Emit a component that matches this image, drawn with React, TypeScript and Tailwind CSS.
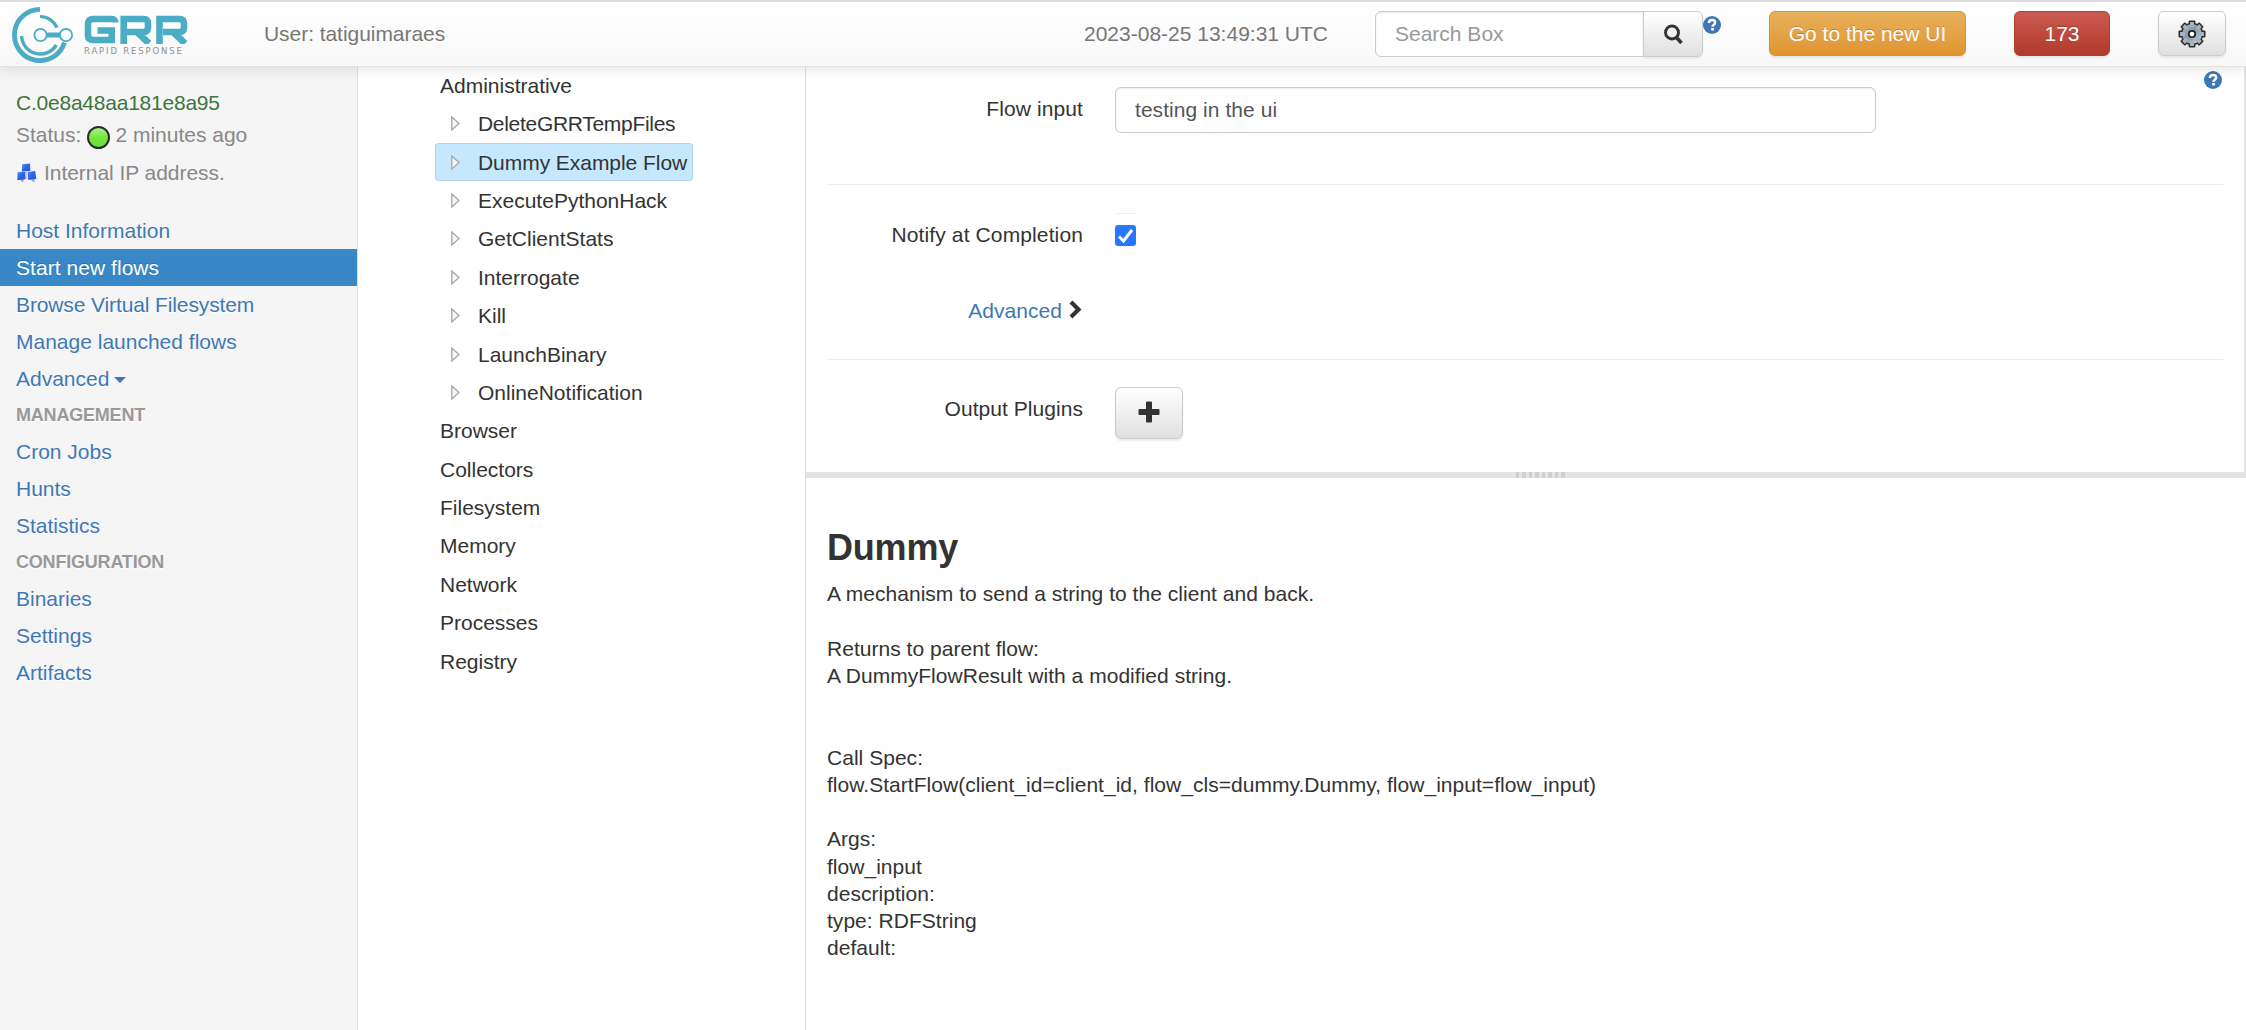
import React from 'react';

const SIDE_TOP = ['Host Information', 'Start new flows', 'Browse Virtual Filesystem', 'Manage launched flows'];
const CHILDREN = ['DeleteGRRTempFiles', 'Dummy Example Flow', 'ExecutePythonHack', 'GetClientStats', 'Interrogate', 'Kill', 'LaunchBinary', 'OnlineNotification'];
const ROOTS = ['Browser', 'Collectors', 'Filesystem', 'Memory', 'Network', 'Processes', 'Registry'];
const TEETH = [0, 45, 90, 135, 180, 225, 270, 315];

const DOC = `A mechanism to send a string to the client and back.

Returns to parent flow:
A DummyFlowResult with a modified string.


Call Spec:
flow.StartFlow(client_id=client_id, flow_cls=dummy.Dummy, flow_input=flow_input)

Args:
flow_input
description:
type: RDFString
default:`;

function LogoMark() {
  return (
    <svg className="block h-[62px] w-[64px] shrink-0" viewBox="0 0 64 62" fill="none" stroke="#4bacc6">
      <path d="M30 6.400A25.600 25.600 0 1 0 54.500 39.500" strokeWidth="4.800" />
      <path d="M30 13.500A18.500 18.500 0 0 1 47 24.700" strokeWidth="3.200" />
      <path d="M11.600 33A18.700 18.700 0 0 0 46.300 42" strokeWidth="3.400" />
      <path d="M36.500 32H50" strokeWidth="5" />
      <circle cx="30.500" cy="32" r="6.100" strokeWidth="1.800" fill="#fdfdfd" />
      <circle cx="56" cy="32" r="6.100" strokeWidth="1.800" fill="#fdfdfd" />
    </svg>
  );
}

function HelpIcon() {
  return (
    <svg className="block h-[18px] w-[18px]" viewBox="0 0 18 18">
      <circle cx="9" cy="9" r="9" fill="#3f78b5" />
      <path d="M5.900 7.100C5.900 5 7.200 4.100 9.100 4.100s3 1 3 2.600c0 2-2.600 2-2.600 4" fill="none" stroke="#fff" strokeWidth="2.500" />
      <rect x="8.200" y="12" width="2.700" height="2.500" fill="#fff" />
    </svg>
  );
}

function Gear() {
  return (
    <svg className="block h-[28px] w-[28px]" viewBox="-14 -14 28 28">
      <defs>
        <linearGradient id="gear" gradientUnits="userSpaceOnUse" x1="-10" y1="-10" x2="10" y2="10">
          <stop offset="0" stopColor="#a9b5c3" />
          <stop offset="0.45" stopColor="#8797a9" />
          <stop offset="1" stopColor="#d3d9e0" />
        </linearGradient>
      </defs>
      <circle r="11.3" fill="#2b2b2b" />
      {TEETH.map((a) => <rect key={a} x="-3.400" y="-13.500" width="6.800" height="7" rx="1" fill="#2b2b2b" transform={`rotate(${a})`} />)}
      <circle r="9.900" fill="url(#gear)" />
      {TEETH.map((a) => <rect key={a} x="-2" y="-12" width="4" height="5" fill="#a7b2bf" transform={`rotate(${a})`} />)}
      <circle r="3.200" fill="#fff" stroke="#222" strokeWidth="1.800" />
    </svg>
  );
}

function Cubes() {
  return (
    <svg className="block h-[20px] w-[21px]" viewBox="0 0 21 20">
      <defs>
        <linearGradient id="cube" x1="0" y1="0" x2="1" y2="1">
          <stop offset="0" stopColor="#5b8df2" />
          <stop offset="0.5" stopColor="#2a62e6" />
          <stop offset="1" stopColor="#2556d6" />
        </linearGradient>
      </defs>
      <path d="M3 16h5l-1 3.500zM14 16h5l-1 3.500z" fill="#a5a5a5" />
      <path d="M6.200 1.200L14 0.600L14.300 8L5.800 8.600z" fill="url(#cube)" />
      <path d="M1.500 9.300L9.300 8.700L9.700 16.200L1.300 17.200z" fill="url(#cube)" />
      <path d="M11.600 9L19.200 8L20.300 15.800L12.200 17z" fill="url(#cube)" />
      <path d="M9.300 8.700L11 8.200L11.500 15.500L9.700 16.200z" fill="#c9c9cf" />
    </svg>
  );
}

function SideLink({ label, active = false, caret = false }: { label: string; active?: boolean; caret?: boolean }) {
  return (
    <a
      className={
        active
          ? 'flex h-[37px] items-center bg-[#3887c7] pl-4 tracking-[0.05px] text-white [text-shadow:0_-1px_0_rgba(0,0,0,0.2)]'
          : label === 'Browse Virtual Filesystem'
            ? 'flex h-[37px] items-center pl-4 tracking-[-0.12px] text-[#3f78b5] [text-shadow:0_1px_0_#fff]'
            : 'flex h-[37px] items-center pl-4 text-[#3f78b5] [text-shadow:0_1px_0_#fff]'
      }
    >
      {label}
      {caret && <span className="ml-[5px] mt-0.5 border-x-[6px] border-t-[6px] border-x-transparent border-t-[#3f78b5]" />}
    </a>
  );
}

function SideHeader({ label }: { label: string }) {
  return <div className="flex h-[36.2px] items-center pl-4 pt-px text-[18px] font-bold tracking-[-0.2px] text-[#999] [text-shadow:0_1px_0_#fff]">{label}</div>;
}

export default function App() {
  return (
    <div className="flex h-[1030px] w-[2246px] flex-col overflow-hidden bg-white font-['Liberation_Sans',Arial,sans-serif] text-[21px] leading-[27.25px] text-[#333]">
      <header className="relative z-10 flex h-[67px] shrink-0 items-start border-b border-[#e2e2e2] border-t-2 border-t-[#dcdcdc] bg-linear-to-b from-white to-[#f8f8f8] pl-[10px] text-[#777] shadow-[0_1px_14px_rgba(0,0,0,0.12)]">
        <div className="mt-[1px] flex">
          <LogoMark />
          <div className="ml-[10px] mt-[12px] w-[106px]">
            <svg className="block h-[29px] w-[105px]" viewBox="0 0 105 29" fill="none" stroke="#4bacc6" strokeWidth="6.600">
              <path d="M31 7.500V7Q31 4 28 4H9Q4 4 4 8.500V20Q4 25 9 25H27.700V15.500H13.500" />
              <path d="M39.700 29V4H59.500Q64 4 64 8.500V12.500Q64 17 59.500 17H43M53 17L65 28.500" />
              <path d="M75.500 29V4H95.500Q100 4 100 8.500V12.500Q100 17 95.500 17H79M89 17L101 28.500" />
            </svg>
            <div className="mt-[3px] whitespace-nowrap font-['DejaVu_Sans',sans-serif] text-[8.5px] leading-[9px] tracking-[1.85px] text-[#8f8f8f]">RAPID RESPONSE</div>
          </div>
        </div>
        <div className="ml-[74px] flex h-[64px] w-[820px] items-center tracking-[-0.05px]">User: tatiguimaraes</div>
        <div className="flex h-[64px] w-[291px] items-center whitespace-nowrap">2023-08-25 13:49:31 UTC</div>
        <div className="mt-[9px] flex h-[46px] w-[328px]">
          <div className="flex w-[269px] items-center rounded-l-md border border-[#ccc] bg-white pl-[19px] text-[#999] shadow-[inset_0_1px_2px_rgba(0,0,0,0.08)]">Search Box</div>
          <div className="-ml-px flex w-[60px] items-center justify-center rounded-r-md border border-[#ccc] bg-linear-to-b from-white to-[#e0e0e0] shadow-[0_2px_2px_rgba(0,0,0,0.06)]">
            <svg className="h-[21px] w-[21px]" viewBox="0 0 21 21" fill="none" stroke="#333" strokeWidth="2.9">
              <circle cx="9" cy="8.500" r="6.500" />
              <path d="M13 13l5.500 6" strokeWidth="3.500" />
            </svg>
          </div>
        </div>
        <div className="mt-[14px]"><HelpIcon /></div>
        <button className="ml-[48px] mt-[9px] h-[45px] w-[197px] rounded-md border border-[#d9942f] bg-linear-to-b from-[#e8b05b] to-[#e0952f] text-white shadow-[0_2px_2px_rgba(0,0,0,0.08)] [text-shadow:0_-1px_0_rgba(0,0,0,0.2)]">Go to the new UI</button>
        <button className="ml-[48px] mt-[9px] h-[45px] w-[96px] rounded-md border border-[#b23e31] bg-linear-to-b from-[#cb5a50] to-[#b03a2b] text-white shadow-[0_2px_2px_rgba(0,0,0,0.08)] [text-shadow:0_-1px_0_rgba(0,0,0,0.2)]">173</button>
        <button className="ml-[48px] mt-[9px] flex h-[45px] w-[68px] items-center justify-center rounded-md border border-[#ccc] bg-linear-to-b from-white to-[#e0e0e0] shadow-[0_2px_2px_rgba(0,0,0,0.08)]"><Gear /></button>
      </header>

      <div className="flex min-h-0 flex-1">
        <aside className="w-[358px] shrink-0 border-r border-[#e0e0e0] bg-[#f5f5f5]">
          <div className="h-[145px] pl-4 pt-[22px] text-[#888]">
            <div className="tracking-[-0.23px] text-[#3c763d] leading-[28px]">C.0e8a48aa181e8a95</div>
            <div className="mt-[2px] flex h-[32px] items-center">
              Status:
              <span className="ml-[6px] mr-[5px] mt-1 h-[23px] w-[23px] rounded-full border-2 border-[#2b2b2b] bg-linear-to-b from-[#a5f283] via-[#72e83a] to-[#68e02e]" />
              2 minutes ago
            </div>
            <div className="mt-[8px] flex h-[28px] items-center gap-[7px] tracking-[-0.05px]"><Cubes />Internal IP address.</div>
          </div>
          {SIDE_TOP.map((l) => <SideLink key={l} label={l} active={l === 'Start new flows'} />)}
          <SideLink label="Advanced" caret />
          <SideHeader label="MANAGEMENT" />
          {['Cron Jobs', 'Hunts', 'Statistics'].map((l) => <SideLink key={l} label={l} />)}
          <SideHeader label="CONFIGURATION" />
          {['Binaries', 'Settings', 'Artifacts'].map((l) => <SideLink key={l} label={l} />)}
        </aside>

        <nav className="w-[448px] shrink-0 border-r border-[#e0e0e0] pl-[77px]">
          <div className="flex h-[37.6px] items-center pl-[5px]">Administrative</div>
          {CHILDREN.map((c) => (
            <div key={c} className="flex h-[38.4px] items-center">
              <div
                className={
                  c === 'Dummy Example Flow'
                    ? 'flex h-[38px] w-[258px] items-center whitespace-nowrap rounded-[3px] border border-[#b4d5e8] bg-[#c5e8fe] pl-[15px] tracking-[-0.05px]'
                    : c === 'DeleteGRRTempFiles'
                      ? 'flex h-[38px] items-center pl-[16px] tracking-[-0.3px]'
                      : 'flex h-[38px] items-center pl-[16px]'
                }
              >
                <svg className="mr-[18px] h-[15px] w-[9px]" viewBox="0 0 9 15"><path d="M.8 1L8 7.500L.8 14z" fill="#f8f8f8" stroke="#aaa" strokeWidth="1.400" /></svg>
                {c}
              </div>
            </div>
          ))}
          {ROOTS.map((r) => <div key={r} className="flex h-[38.4px] items-center pl-[5px]">{r}</div>)}
        </nav>

        <main className="flex min-w-0 flex-1 flex-col">
          <section className="relative h-[405px] shrink-0 border-r-2 border-[#e4e4e4] pl-[21px] pr-[21px]">
            <div className="absolute right-[22px] top-[4px]"><HelpIcon /></div>
            <div className="flex h-[118px] border-b border-[#eee] pt-[20px]">
              <div className="mr-[32px] w-[256px] pt-[8px] text-right tracking-[0.1px]">Flow input</div>
              <div className="flex h-[46px] w-[761px] items-center rounded-md border border-[#ccc] pl-[19px] tracking-[0.05px] text-[#555] shadow-[inset_0_1px_2px_rgba(0,0,0,0.08)]">testing in the ui</div>
            </div>
            <div className="h-[175px] border-b border-[#eee]">
              <div className="flex pt-[28px]">
                <div className="mr-[32px] w-[256px] pt-[8px] text-right tracking-[0.12px]">Notify at Completion</div>
                <div className="flex h-[46px] w-[21px] items-start border-t border-[#eee] pt-[11px]">
                  <span className="flex h-[21px] w-[21px] items-center justify-center rounded-[3px] bg-[#2777ff]">
                    <svg className="h-[15px] w-[15px]" viewBox="0 0 15 15"><path d="M1 8.500L5.500 13L14 2" fill="none" stroke="#fff" strokeWidth="3" /></svg>
                  </span>
                </div>
              </div>
              <div className="mt-[38px] flex w-[256px] items-center justify-end tracking-[0.05px] text-[#3f78b5]">
                Advanced
                <svg className="-mt-[3px] ml-[7px] mr-[1px] h-[19px] w-[13px]" viewBox="0 0 13 19"><path d="M2 2l7.500 7.500L2 17" fill="none" stroke="#333" strokeWidth="4.200" /></svg>
              </div>
            </div>
            <div className="flex pt-[27px]">
              <div className="mr-[32px] w-[256px] pt-[8px] text-right tracking-[0.05px]">Output Plugins</div>
              <button className="flex h-[52px] w-[68px] items-center justify-center rounded-md border border-[#ccc] bg-linear-to-b from-white to-[#e0e0e0] pb-[3px] shadow-[0_2px_2px_rgba(0,0,0,0.08)]">
                <svg className="h-[22px] w-[22px]" viewBox="0 0 22 22"><path d="M9 .5h4a1 1 0 0 1 1 1V8h6.500a1 1 0 0 1 1 1v4a1 1 0 0 1-1 1H14v6.500a1 1 0 0 1-1 1H9a1 1 0 0 1-1-1V14H1.500a1 1 0 0 1-1-1V9a1 1 0 0 1 1-1H8V1.500a1 1 0 0 1 1-1z" fill="#333" /></svg>
              </button>
            </div>
          </section>
          <div className="flex h-[6px] shrink-0 items-center justify-center gap-[3px] bg-[#e4e4e4] pl-[28px]">
            {TEETH.map((i) => <span key={i} className="h-[6px] w-[3.5px] bg-[#cfcfcf]" />)}
          </div>
          <section className="pl-[21px]">
            <h1 className="mt-[50px] text-[36px] font-bold leading-[40px] tracking-[-0.2px]">Dummy</h1>
            <pre className="mt-[12px] font-['Liberation_Sans',Arial,sans-serif] tracking-[0.03px]">{DOC}</pre>
          </section>
        </main>
      </div>
    </div>
  );
}
